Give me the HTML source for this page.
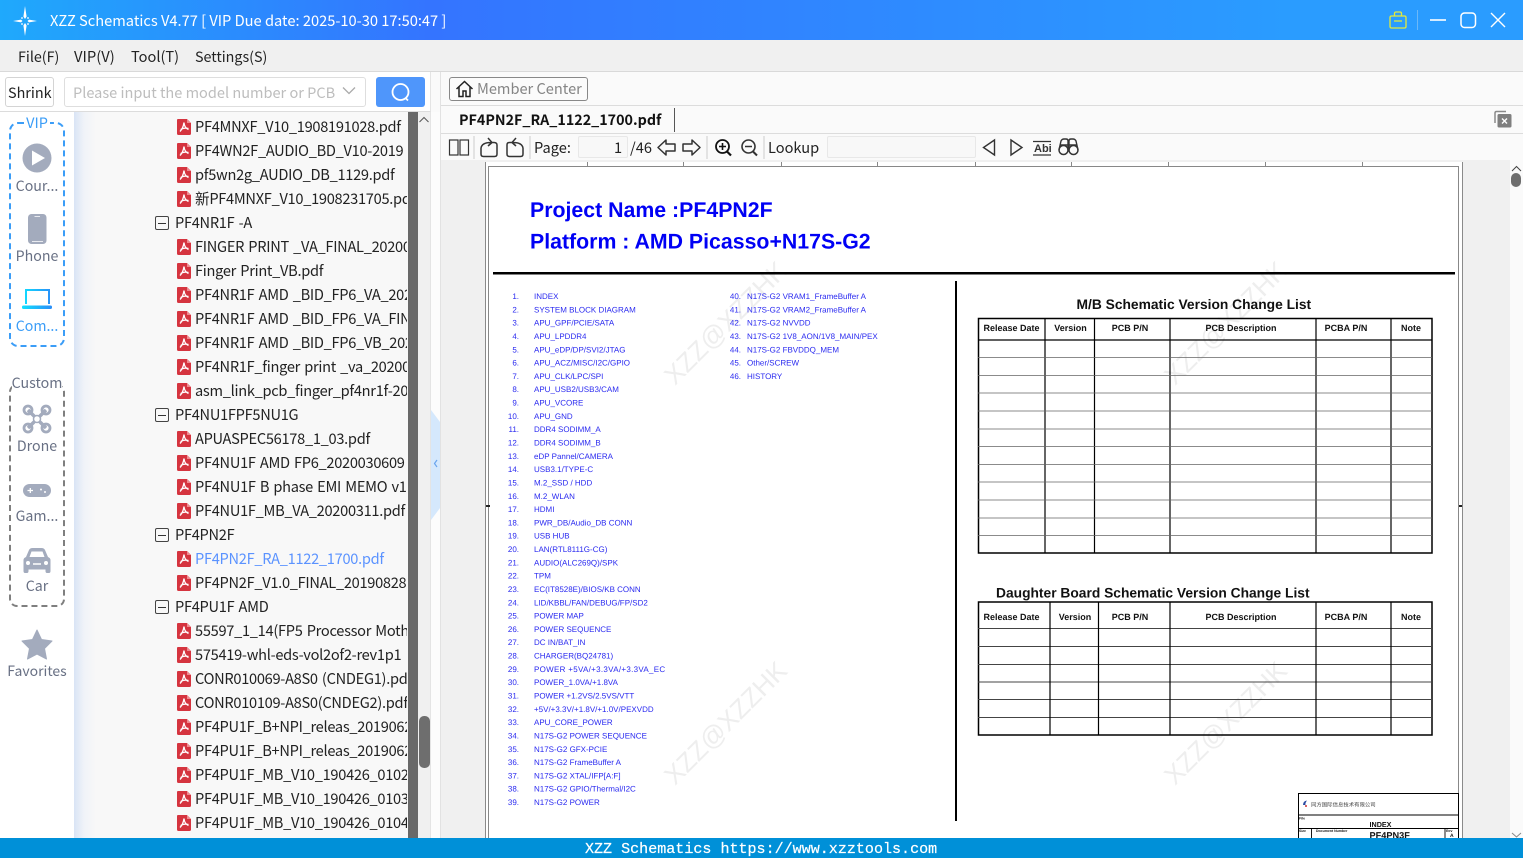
<!DOCTYPE html>
<html><head><meta charset="utf-8"><title>XZZ Schematics</title>
<style>
*{box-sizing:border-box;margin:0;padding:0}
html,body{width:1523px;height:858px;overflow:hidden;background:#fafafa}
body{position:relative;font-family:"Noto Sans CJK SC","Liberation Sans",sans-serif;font-size:15px;color:#222}
.a{position:absolute}
.t{position:absolute;white-space:nowrap;line-height:20px}
.c{position:absolute;white-space:nowrap;line-height:20px;width:74px;text-align:center;left:0;color:#687084;font-size:14.2px}
#tree{position:absolute;left:74px;top:112px;width:333px;height:726px;overflow:hidden;background:linear-gradient(90deg,#d9e4f5 0,#f0f3f8 10px,#f8f8f8 22px)}
.r{position:absolute;left:121px;white-space:nowrap;line-height:20px;font-size:14.6px;letter-spacing:-.28px;word-spacing:1.2px;color:#222;height:20px}
.g{position:absolute;left:101px;white-space:nowrap;line-height:20px;font-size:14.6px;letter-spacing:-.28px;word-spacing:1.2px;color:#222}
.r svg{position:absolute;left:-18px;top:2px}
.g i{position:absolute;left:-20px;top:3px;width:14px;height:14px;border:1px solid #444;border-radius:2px}
.g i:after{content:"";position:absolute;left:2px;right:2px;top:5.5px;height:1px;background:#333}
</style></head><body>
<svg width="0" height="0" style="position:absolute"><defs>
<g id="pdf"><path d="M1 0H10L14 4V14.5Q14 16 12.5 16H1.5Q0 16 0 14.5V1Q0 0 1 0Z" fill="#d5343f"/><path d="M10 0L14 4H10Z" fill="#ef8a90"/><path d="M7 3.5C6.5 7 5.5 10 3 12.5M7 3.5C7.3 7 9 9.5 11.5 10.5M3.5 10.5C6 9 8.5 8.7 11.5 9.5" fill="none" stroke="#fff" stroke-width="1.3"/></g>
</defs></svg>

<!-- title bar -->
<div class="a" style="left:0;top:0;width:1523px;height:40px;background:linear-gradient(90deg,#1fa9fc 0,#3474ff 430px,#2a9cff 1290px,#2a9cff 1523px)"></div>
<svg class="a" style="left:11px;top:5px" width="30" height="32" viewBox="0 0 30 32"><path d="M14 1L15.6 11.5L14 14L12.4 11.5ZM14 31L12.4 20.5L14 18L15.6 20.5ZM2 16L10 14.6L11.5 16L10 17.4ZM26 16L18 17.4L16.5 16L18 14.6Z" fill="#fff"/><circle cx="11" cy="13" r=".9" fill="#fff"/><circle cx="17" cy="13" r=".9" fill="#fff"/><circle cx="11" cy="19" r=".9" fill="#fff"/><circle cx="17" cy="19" r=".9" fill="#fff"/></svg>
<div class="t" style="left:50px;top:11px;color:#fff;font-size:14.65px">XZZ Schematics V4.77 [ VIP Due date: 2025-10-30 17:50:47 ]</div>
<svg class="a" style="left:1385px;top:5px" width="130" height="30" viewBox="0 0 130 30" fill="none">
<path d="M6.500 11H19.500Q21 11 21 12.500V21.500Q21 23 19.500 23H6.500Q5 23 5 21.500V12.500Q5 11 6.500 11ZM9.500 11V8.500Q9.500 7 11 7H15Q16.500 7 16.500 8.500V11M9 16H17" stroke="#e3ea3c" stroke-width="1.300"/>
<path d="M32.500 5V25" stroke="#6cb8f8"/>
<path d="M45 15H61" stroke="#fff" stroke-width="1.600"/>
<rect x="76" y="8" width="14.500" height="14.500" rx="3.500" stroke="#fff" stroke-width="1.500"/>
<path d="M106 8L120 22M120 8L106 22" stroke="#fff" stroke-width="1.400"/>
</svg>

<!-- menu -->
<div class="a" style="left:0;top:40px;width:1523px;height:32px;background:#f0f0f0;border-bottom:1px solid #d9d9d9"></div>
<div class="t" style="left:18px;top:47px;font-size:14.3px">File(F)</div>
<div class="t" style="left:74px;top:47px;font-size:14.8px">VIP(V)</div>
<div class="t" style="left:131px;top:47px;font-size:14.6px">Tool(T)</div>
<div class="t" style="left:195px;top:47px;font-size:14.3px">Settings(S)</div>

<!-- left top -->
<div class="a" style="left:0;top:72px;width:431px;height:40px;background:#fff;border-bottom:1px solid #dcdcdc;border-right:1px solid #e4e4e4"></div>
<div class="a" style="left:5px;top:77px;width:49px;height:30px;border:1px solid #d4d4d4;border-radius:3px;background:#fff"></div>
<div class="t" style="left:8px;top:83px;font-size:14.4px">Shrink</div>
<div class="a" style="left:64px;top:77px;width:302px;height:30px;border:1px solid #dedede;border-radius:3px;background:#fff"></div>
<div class="t" style="left:73px;top:83px;font-size:14.55px;color:#bdbdbd">Please input the model number or PCB</div>
<svg class="a" style="left:342px;top:86px" width="14" height="10"><path d="M1 1.500L7 7.500L13 1.500" fill="none" stroke="#aaa" stroke-width="1.300"/></svg>
<div class="a" style="left:376px;top:77px;width:49px;height:30px;background:#4f96fb;border-radius:3px"></div>
<svg class="a" style="left:390px;top:81px" width="22" height="22" fill="none"><circle cx="10.500" cy="11" r="8" stroke="#fff" stroke-width="1.800"/><path d="M15.500 17L18 19.500" stroke="#fff" stroke-width="1.800"/></svg>

<!-- rail -->
<div class="a" style="left:0;top:112px;width:74px;height:726px;background:#fff"></div>
<div class="a" style="left:9px;top:122px;width:56px;height:225px;border:2px dashed #3b9df7;border-radius:9px"></div>
<div class="a" style="left:26px;top:114px;width:24px;height:18px;background:#fff"></div>
<div class="c" style="top:113px;color:#3b9df7;font-size:14.500px">VIP</div>
<svg class="a" style="left:0;top:112px" width="74" height="560">
<circle cx="37" cy="46" r="14.500" fill="#a3abbd"/><path d="M32 38.500L45 46L32 53.500Z" fill="#fff"/>
<rect x="28" y="102" width="18.500" height="30" rx="3.500" fill="#a3abbd"/><path d="M34.500 104.500H40M32 129.500H43" stroke="#e9ebf0" stroke-width="1"/>
<defs><linearGradient id="lp" gradientUnits="userSpaceOnUse" x1="22" x2="52" y1="0" y2="0"><stop offset="0" stop-color="#0fe0ff"/><stop offset="1" stop-color="#2a8df8"/></linearGradient></defs>
<path d="M26 192V178H49V192" fill="none" stroke="url(#lp)" stroke-width="2"/><path d="M26 177H49V179H26Z" fill="url(#lp)"/><rect x="22" y="193.500" width="30" height="3.500" rx="1.500" fill="url(#lp)"/>
<g fill="none" stroke="#a3abbd"><path d="M28 298L46 316M46 298L28 316" stroke-width="3.500"/><circle cx="28" cy="298" r="4" stroke-width="2.800"/><circle cx="46" cy="298" r="4" stroke-width="2.800"/><circle cx="28" cy="316" r="4" stroke-width="2.800"/><circle cx="46" cy="316" r="4" stroke-width="2.800"/></g><circle cx="37" cy="307" r="3.500" fill="#fff" stroke="#a3abbd" stroke-width="1.500"/>
<rect x="23" y="372" width="28" height="13" rx="6.500" fill="#a3abbd"/><path d="M27.500 378.500H33M30.300 376V381" stroke="#fff" stroke-width="1.300"/><circle cx="41" cy="377.500" r="1" fill="#fff"/><circle cx="45" cy="380" r="1" fill="#fff"/>
<g transform="translate(0 12)"><path d="M23.500 447V436Q23.500 434 26 433L29 426Q30 424 32.500 424H41.500Q44 424 45 426L48 433Q50.500 434 50.500 436V447Q50.500 449 49 449H47Q45.500 449 45.500 447V445.500H28.500V447Q28.500 449 27 449H25Q23.500 449 23.500 447Z" fill="#a3abbd"/><path d="M29.500 433L31.500 427.500H42.500L44.500 433Z" fill="#fff"/><circle cx="28" cy="439" r="2" fill="#fff"/><circle cx="46" cy="439" r="2" fill="#fff"/><path d="M33 440H41" stroke="#fff" stroke-width="1.500"/></g>
<path d="M37 518L41.500 527.500L52 529L44.500 536.500L46.500 547L37 542L27.500 547L29.500 536.500L22 529L32.500 527.500Z" fill="#a3abbd" stroke="#a3abbd" stroke-linejoin="round"/>
</svg>
<div class="c" style="top:176px">Cour...</div>
<div class="c" style="top:246px">Phone</div>
<div class="c" style="top:316px;color:#3b9df7">Com...</div>
<div class="a" style="left:9px;top:384px;width:56px;height:223px;border:2px dashed #7f7f7f;border-radius:8px"></div>
<div class="a" style="left:12px;top:374px;width:50px;height:18px;background:#fff"></div>
<div class="c" style="top:373px">Custom</div>
<div class="c" style="top:436px">Drone</div>
<div class="c" style="top:506px">Gam...</div>
<div class="c" style="top:576px">Car</div>
<div class="c" style="top:661px;font-size:14px">Favorites</div>

<!-- tree -->
<div id="tree">
<div class="r" style="top:5px"><svg width="14" height="16"><use href="#pdf"/></svg>PF4MNXF_V10_1908191028.pdf</div>
<div class="r" style="top:29px"><svg width="14" height="16"><use href="#pdf"/></svg>PF4WN2F_AUDIO_BD_V10-2019</div>
<div class="r" style="top:53px"><svg width="14" height="16"><use href="#pdf"/></svg>pf5wn2g_AUDIO_DB_1129.pdf</div>
<div class="r" style="top:77px"><svg width="14" height="16"><use href="#pdf"/></svg>新PF4MNXF_V10_1908231705.pdf</div>
<div class="g" style="top:101px"><i></i>PF4NR1F -A</div>
<div class="r" style="top:125px"><svg width="14" height="16"><use href="#pdf"/></svg>FINGER PRINT _VA_FINAL_20200</div>
<div class="r" style="top:149px"><svg width="14" height="16"><use href="#pdf"/></svg>Finger Print_VB.pdf</div>
<div class="r" style="top:173px"><svg width="14" height="16"><use href="#pdf"/></svg>PF4NR1F AMD _BID_FP6_VA_2020</div>
<div class="r" style="top:197px"><svg width="14" height="16"><use href="#pdf"/></svg>PF4NR1F AMD _BID_FP6_VA_FINAL</div>
<div class="r" style="top:221px"><svg width="14" height="16"><use href="#pdf"/></svg>PF4NR1F AMD _BID_FP6_VB_2020</div>
<div class="r" style="top:245px"><svg width="14" height="16"><use href="#pdf"/></svg>PF4NR1F_finger print _va_20200</div>
<div class="r" style="top:269px"><svg width="14" height="16"><use href="#pdf"/></svg>asm_link_pcb_finger_pf4nr1f-20</div>
<div class="g" style="top:293px"><i></i>PF4NU1FPF5NU1G</div>
<div class="r" style="top:317px"><svg width="14" height="16"><use href="#pdf"/></svg>APUASPEC56178_1_03.pdf</div>
<div class="r" style="top:341px"><svg width="14" height="16"><use href="#pdf"/></svg>PF4NU1F AMD FP6_2020030609</div>
<div class="r" style="top:365px"><svg width="14" height="16"><use href="#pdf"/></svg>PF4NU1F B phase EMI MEMO v1</div>
<div class="r" style="top:389px"><svg width="14" height="16"><use href="#pdf"/></svg>PF4NU1F_MB_VA_20200311.pdf</div>
<div class="g" style="top:413px"><i></i>PF4PN2F</div>
<div class="r" style="top:437px;color:#5b93ff"><svg width="14" height="16"><use href="#pdf"/></svg>PF4PN2F_RA_1122_1700.pdf</div>
<div class="r" style="top:461px"><svg width="14" height="16"><use href="#pdf"/></svg>PF4PN2F_V1.0_FINAL_20190828</div>
<div class="g" style="top:485px"><i></i>PF4PU1F AMD</div>
<div class="r" style="top:509px"><svg width="14" height="16"><use href="#pdf"/></svg>55597_1_14(FP5 Processor Moth</div>
<div class="r" style="top:533px"><svg width="14" height="16"><use href="#pdf"/></svg>575419-whl-eds-vol2of2-rev1p1</div>
<div class="r" style="top:557px"><svg width="14" height="16"><use href="#pdf"/></svg>CONR010069-A8S0 (CNDEG1).pdf</div>
<div class="r" style="top:581px"><svg width="14" height="16"><use href="#pdf"/></svg>CONR010109-A8S0(CNDEG2).pdf</div>
<div class="r" style="top:605px"><svg width="14" height="16"><use href="#pdf"/></svg>PF4PU1F_B+NPI_releas_2019062</div>
<div class="r" style="top:629px"><svg width="14" height="16"><use href="#pdf"/></svg>PF4PU1F_B+NPI_releas_2019062</div>
<div class="r" style="top:653px"><svg width="14" height="16"><use href="#pdf"/></svg>PF4PU1F_MB_V10_190426_0102</div>
<div class="r" style="top:677px"><svg width="14" height="16"><use href="#pdf"/></svg>PF4PU1F_MB_V10_190426_0103</div>
<div class="r" style="top:701px"><svg width="14" height="16"><use href="#pdf"/></svg>PF4PU1F_MB_V10_190426_0104</div>
</div>
<div class="a" style="left:407px;top:112px;width:1px;height:726px;background:#f8f8f8"></div>
<div class="a" style="left:408px;top:112px;width:10px;height:726px;background:#696969"></div>
<div class="a" style="left:418px;top:112px;width:13px;height:726px;background:#f0f0f0;border-right:1px solid #e4e4e4"></div>
<svg class="a" style="left:418px;top:115px" width="12" height="10"><path d="M1.500 7L6 2.500L10.500 7" fill="none" stroke="#555"/></svg>
<div class="a" style="left:419px;top:716px;width:11px;height:52px;background:#6e6e6e;border-radius:5px"></div>
<div class="a" style="left:431px;top:112px;width:9px;height:726px;background:#fcfcfc"></div>
<svg class="a" style="left:431px;top:408px" width="10" height="114"><path d="M0 2L9 14V100L0 112Z" fill="#d5e8fc"/><path d="M6 52L3.500 55.500L6 59" fill="none" stroke="#6aa5ee" stroke-width="1.200"/></svg>

<!-- right panel -->
<div class="a" style="left:440px;top:72px;width:1px;height:766px;background:#e2e2e2"></div>
<div class="a" style="left:441px;top:105px;width:1082px;height:1px;background:#dcdcdc"></div>
<div class="a" style="left:441px;top:133px;width:1082px;height:1px;background:#dcdcdc"></div>
<div class="a" style="left:449px;top:77px;width:139px;height:24px;border:1px solid #888;border-radius:3px;background:#fbfbfb"></div>
<svg class="a" style="left:455px;top:79px" width="20" height="20" fill="none" stroke="#222" stroke-width="1.500"><path d="M1.500 10L9.500 2.500L17.500 10M4 8V17.500H8V12H11V17.500H15V8"/></svg>
<div class="t" style="left:477px;top:79px;font-size:14.600px;color:#858585">Member Center</div>
<div class="t" style="left:459px;top:110px;font-size:14.300px;font-weight:700;color:#111">PF4PN2F_RA_1122_1700.pdf</div>
<div class="a" style="left:674px;top:108px;width:1px;height:24px;background:#555"></div>
<svg class="a" style="left:1492px;top:108px" width="22" height="22"><path d="M3 15V5Q3 3.500 4.500 3.500H14" fill="none" stroke="#8a8a8a" stroke-width="1.500"/><rect x="5.500" y="6" width="14" height="13.500" rx="1.500" fill="#7f7f7f"/><path d="M10 10.500L15 15.500M15 10.500L10 15.500" stroke="#fff" stroke-width="1.400"/></svg>

<!-- toolbar -->
<svg class="a" style="left:441px;top:134px" width="650" height="27" fill="none" stroke="#333" stroke-width="1.500">
<rect x="8.500" y="6" width="8.500" height="15" stroke-width="1.200"/><rect x="19" y="6" width="8.500" height="15" stroke-width="1.200"/>
<path d="M33 2V25" stroke="#ccc" stroke-width="1"/>
<path d="M40 14Q41 8.500 50 8.500H53Q56 8.500 56 11V20Q56 22.500 53.500 22.500H42.500Q40 22.500 40 20V14M47 4L51 8.500L47 12"/>
<path d="M82 14Q81 8.500 72 8.500H68.500Q66 8.500 66 11V20Q66 22.500 68.500 22.500H79.500Q82 22.500 82 20V14M75 4L71 8.500L75 12"/>
<path d="M89 2V25" stroke="#ccc" stroke-width="1"/>
<path d="M217 13.500L225 6V10H234V17H225V21Z" stroke-linejoin="round"/>
<path d="M259 13.500L251 6V10H242V17H251V21Z" stroke-linejoin="round"/>
<path d="M266 2V25" stroke="#ccc" stroke-width="1"/>
<circle cx="281.500" cy="12.500" r="6.500" stroke="#111" stroke-width="1.800"/><path d="M286 17.500L290 21.500" stroke="#111" stroke-width="2.200"/><path d="M278 12.500H285M281.500 9V16" stroke="#111" stroke-width="1.600"/>
<circle cx="307.500" cy="12.500" r="6.500" stroke-width="1.600"/><path d="M312 17.500L316 21.500" stroke-width="2"/><path d="M304 12.500H311" stroke-width="1.500"/>
<path d="M323 2V25" stroke="#ccc" stroke-width="1"/>
<path d="M553.500 6L542.500 13.500L553.500 21Z" stroke-width="1.400"/>
<path d="M570 6L581 13.500L570 21Z" stroke-width="1.400"/>
<path d="M592 7.500H610M592 21H610" stroke-width="1.200"/>
<path d="M618 16L620 7Q621 5 623 5H625Q627 5 627 7V16M637 16L635 7Q634 5 632 5H630Q628 5 628 7V16M618.500 11H636.500" stroke-width="1.400"/><circle cx="622.500" cy="16" r="4.500" stroke-width="1.500"/><circle cx="632.500" cy="16" r="4.500" stroke-width="1.500"/>
</svg>
<div class="t" style="left:1034px;top:139px;font-size:11px;font-weight:700;font-family:'Liberation Sans',sans-serif;color:#333">Abi</div>
<div class="t" style="left:534px;top:138px;font-size:14.600px">Page:</div>
<div class="a" style="left:578px;top:136px;width:50px;height:22px;background:#f8f8f8;border:1px solid #e8e8e8;border-radius:2px"></div>
<div class="t" style="left:614px;top:138px;font-size:14.600px">1</div>
<div class="t" style="left:630px;top:138px;font-size:14.600px">/46</div>
<div class="t" style="left:768px;top:138px;font-size:14.600px">Lookup</div>
<div class="a" style="left:827px;top:136px;width:149px;height:22px;background:#f8f8f8;border:1px solid #e8e8e8;border-radius:2px"></div>

<!-- viewer -->
<div class="a" style="left:441px;top:160px;width:1069px;height:678px;background:#f0f0f0"></div>
<div class="a" style="left:1510px;top:160px;width:13px;height:678px;background:#fafafa"></div>
<svg class="a" style="left:1510px;top:164px" width="13" height="10"><path d="M2 7L6.500 2.500L11 7" fill="none" stroke="#444"/></svg>
<div class="a" style="left:1511px;top:173px;width:10px;height:14px;background:#6e6e6e;border-radius:5px"></div>
<svg class="a" style="left:1510px;top:832px" width="13" height="6"><path d="M2 1L6.500 5L11 1" fill="none" stroke="#888"/></svg>

<svg class="a" style="left:0;top:0;text-rendering:geometricPrecision" width="1523" height="838" font-family="'Liberation Sans',Arial,sans-serif">
<rect x="486" y="162" width="977" height="676" fill="#fff"/>
<g fill="none" stroke="#8a8a8a"><path d="M485.500 162V838M1462.500 162V838" /><path d="M488.500 838V166.500H1458.500V838" stroke="#888"/></g>
<path d="M587.500 162V166M683.500 162V166M781.500 162V166M877.500 162V166M975.500 162V166M1071.500 162V166M1168.500 162V166M1265.500 162V166M1362.500 162V166" stroke="#888"/>
<path d="M486 506H490M1459 506H1462" stroke="#222" stroke-width="2"/>
<g fill="#eeeeee" font-size="26"><text transform="translate(675 386) rotate(-45)">XZZ@XZZHK</text><text transform="translate(1175 386) rotate(-45)">XZZ@XZZHK</text><text transform="translate(675 786) rotate(-45)">XZZ@XZZHK</text><text transform="translate(1175 786) rotate(-45)">XZZ@XZZHK</text></g>
<g fill="#0000f5" font-weight="700" font-size="21.300"><text x="530" y="217">Project Name :PF4PN2F</text><text x="530" y="248.500">Platform : AMD Picasso+N17S-G2</text></g>
<rect x="493" y="272" width="962" height="2.500" fill="#000"/>
<rect x="955" y="281" width="2" height="540" fill="#000"/>

<g fill="#2a2af0" font-size="8">
<text text-anchor="end" y="285.700"><tspan x="519" dy="13.316">1.</tspan><tspan x="519" dy="13.316">2.</tspan><tspan x="519" dy="13.316">3.</tspan><tspan x="519" dy="13.316">4.</tspan><tspan x="519" dy="13.316">5.</tspan><tspan x="519" dy="13.316">6.</tspan><tspan x="519" dy="13.316">7.</tspan><tspan x="519" dy="13.316">8.</tspan><tspan x="519" dy="13.316">9.</tspan><tspan x="519" dy="13.316">10.</tspan><tspan x="519" dy="13.316">11.</tspan><tspan x="519" dy="13.316">12.</tspan><tspan x="519" dy="13.316">13.</tspan><tspan x="519" dy="13.316">14.</tspan><tspan x="519" dy="13.316">15.</tspan><tspan x="519" dy="13.316">16.</tspan><tspan x="519" dy="13.316">17.</tspan><tspan x="519" dy="13.316">18.</tspan><tspan x="519" dy="13.316">19.</tspan><tspan x="519" dy="13.316">20.</tspan><tspan x="519" dy="13.316">21.</tspan><tspan x="519" dy="13.316">22.</tspan><tspan x="519" dy="13.316">23.</tspan><tspan x="519" dy="13.316">24.</tspan><tspan x="519" dy="13.316">25.</tspan><tspan x="519" dy="13.316">26.</tspan><tspan x="519" dy="13.316">27.</tspan><tspan x="519" dy="13.316">28.</tspan><tspan x="519" dy="13.316">29.</tspan><tspan x="519" dy="13.316">30.</tspan><tspan x="519" dy="13.316">31.</tspan><tspan x="519" dy="13.316">32.</tspan><tspan x="519" dy="13.316">33.</tspan><tspan x="519" dy="13.316">34.</tspan><tspan x="519" dy="13.316">35.</tspan><tspan x="519" dy="13.316">36.</tspan><tspan x="519" dy="13.316">37.</tspan><tspan x="519" dy="13.316">38.</tspan><tspan x="519" dy="13.316">39.</tspan></text>
<text y="285.700"><tspan x="534" dy="13.316">INDEX</tspan><tspan x="534" dy="13.316">SYSTEM BLOCK DIAGRAM</tspan><tspan x="534" dy="13.316">APU_GPF/PCIE/SATA</tspan><tspan x="534" dy="13.316">APU_LPDDR4</tspan><tspan x="534" dy="13.316">APU_eDP/DP/SVI2/JTAG</tspan><tspan x="534" dy="13.316">APU_ACZ/MISC/I2C/GPIO</tspan><tspan x="534" dy="13.316">APU_CLK/LPC/SPI</tspan><tspan x="534" dy="13.316">APU_USB2/USB3/CAM</tspan><tspan x="534" dy="13.316">APU_VCORE</tspan><tspan x="534" dy="13.316">APU_GND</tspan><tspan x="534" dy="13.316">DDR4 SODIMM_A</tspan><tspan x="534" dy="13.316">DDR4 SODIMM_B</tspan><tspan x="534" dy="13.316">eDP Pannel/CAMERA</tspan><tspan x="534" dy="13.316">USB3.1/TYPE-C</tspan><tspan x="534" dy="13.316">M.2_SSD / HDD</tspan><tspan x="534" dy="13.316">M.2_WLAN</tspan><tspan x="534" dy="13.316">HDMI</tspan><tspan x="534" dy="13.316">PWR_DB/Audio_DB CONN</tspan><tspan x="534" dy="13.316">USB HUB</tspan><tspan x="534" dy="13.316">LAN(RTL8111G-CG)</tspan><tspan x="534" dy="13.316">AUDIO(ALC269Q)/SPK</tspan><tspan x="534" dy="13.316">TPM</tspan><tspan x="534" dy="13.316">EC(IT8528E)/BIOS/KB CONN</tspan><tspan x="534" dy="13.316">LID/KBBL/FAN/DEBUG/FP/SD2</tspan><tspan x="534" dy="13.316">POWER MAP</tspan><tspan x="534" dy="13.316">POWER SEQUENCE</tspan><tspan x="534" dy="13.316">DC IN/BAT_IN</tspan><tspan x="534" dy="13.316">CHARGER(BQ24781)</tspan><tspan x="534" dy="13.316" style="letter-spacing:.3px">POWER +5VA/+3.3VA/+3.3VA_EC</tspan><tspan x="534" dy="13.316">POWER_1.0VA/+1.8VA</tspan><tspan x="534" dy="13.316">POWER +1.2VS/2.5VS/VTT</tspan><tspan x="534" dy="13.316">+5V/+3.3V/+1.8V/+1.0V/PEXVDD</tspan><tspan x="534" dy="13.316">APU_CORE_POWER</tspan><tspan x="534" dy="13.316">N17S-G2 POWER SEQUENCE</tspan><tspan x="534" dy="13.316">N17S-G2 GFX-PCIE</tspan><tspan x="534" dy="13.316">N17S-G2 FrameBuffer A</tspan><tspan x="534" dy="13.316">N17S-G2 XTAL/IFP[A:F]</tspan><tspan x="534" dy="13.316">N17S-G2 GPIO/Thermal/I2C</tspan><tspan x="534" dy="13.316">N17S-G2 POWER</tspan></text>
<text text-anchor="end" y="285.700"><tspan x="741" dy="13.316">40.</tspan><tspan x="741" dy="13.316">41.</tspan><tspan x="741" dy="13.316">42.</tspan><tspan x="741" dy="13.316">43.</tspan><tspan x="741" dy="13.316">44.</tspan><tspan x="741" dy="13.316">45.</tspan><tspan x="741" dy="13.316">46.</tspan></text>
<text y="285.700"><tspan x="747" dy="13.316">N17S-G2 VRAM1_FrameBuffer A</tspan><tspan x="747" dy="13.316">N17S-G2 VRAM2_FrameBuffer A</tspan><tspan x="747" dy="13.316">N17S-G2 NVVDD</tspan><tspan x="747" dy="13.316">N17S-G2 1V8_AON/1V8_MAIN/PEX</tspan><tspan x="747" dy="13.316">N17S-G2 FBVDDQ_MEM</tspan><tspan x="747" dy="13.316">Other/SCREW</tspan><tspan x="747" dy="13.316">HISTORY</tspan></text>
</g>

<g fill="#111" font-weight="700" font-size="13.800"><text x="1076.500" y="309">M/B Schematic Version Change List</text><text x="996" y="597.500">Daughter Board Schematic Version Change List</text></g>
<g fill="none" stroke="#000">
<rect x="978.500" y="318.500" width="453.500" height="234.500" stroke-width="1.500"/>
<path d="M978 340H1432" stroke-width="1.300"/>
<path d="M1045 318V553M1094.500 318V553M1170 318V553M1316 318V553M1391 318V553" stroke-width="1.200"/>
<path d="M978 357.500H1432M978 375.500H1432M978 393H1432M978 411H1432M978 429H1432M978 446.500H1432M978 464.500H1432M978 482H1432M978 500H1432M978 518H1432M978 535.500H1432" stroke="#666" stroke-width=".8"/>
<rect x="978.500" y="602" width="453.500" height="133" stroke-width="1.500"/>
<path d="M978 628.500H1432M978 646.500H1432M978 664.500H1432M978 682H1432M978 699.500H1432M978 717.500H1432" stroke="#444" stroke-width=".9"/>
<path d="M1050 602V735M1098.500 602V735M1170 602V735M1316 602V735M1391 602V735" stroke-width="1.200"/>
</g>
<g fill="#111" font-weight="700" font-size="9" text-anchor="middle">
<text x="1011.500" y="331">Release Date</text><text x="1070.500" y="331">Version</text><text x="1130" y="331">PCB P/N</text><text x="1241" y="331">PCB Description</text><text x="1346" y="331">PCBA P/N</text><text x="1411" y="331">Note</text>
<text x="1011.500" y="620">Release Date</text><text x="1075" y="620">Version</text><text x="1130" y="620">PCB P/N</text><text x="1241" y="620">PCB Description</text><text x="1346" y="620">PCBA P/N</text><text x="1411" y="620">Note</text>
</g>

<g fill="none" stroke="#000"><rect x="1298.500" y="793.500" width="160" height="50" stroke-width="1"/><path d="M1298 815H1459M1298 828.500H1459M1311.500 828V840M1445 828V840" stroke-width=".9"/></g>
<path d="M1303 805Q1303 801 1307 800.500Q1305 803 1305.500 805Z" fill="#2a4aa0"/><circle cx="1306" cy="806" r="1" fill="#c33"/>
<text x="1311" y="806.500" font-size="5.400" fill="#444" font-family="'Noto Sans CJK SC',sans-serif">同方国际信息技术有限公司</text>
<g fill="#111" font-weight="700"><text x="1369.500" y="827" font-size="7.200">INDEX</text><text x="1369.500" y="838.500" font-size="9.200">PF4PN3F</text><text x="1299" y="819.500" font-size="3.500">File</text><text x="1299" y="832" font-size="3.500">Size</text><text x="1316" y="832" font-size="3.500">Document Number</text><text x="1446" y="832" font-size="3.500">Rev</text><text x="1450" y="837" font-size="5">A</text></g>
</svg>

<!-- status bar -->
<div class="a" style="left:0;top:838px;width:1523px;height:20px;background:#0090d8"></div>
<div class="t" style="left:585px;top:840px;color:#fff;font-family:'Liberation Mono',monospace;font-size:15.05px;line-height:19px;-webkit-text-stroke:.2px #fff">XZZ Schematics https://www.xzztools.com</div>
</body></html>
